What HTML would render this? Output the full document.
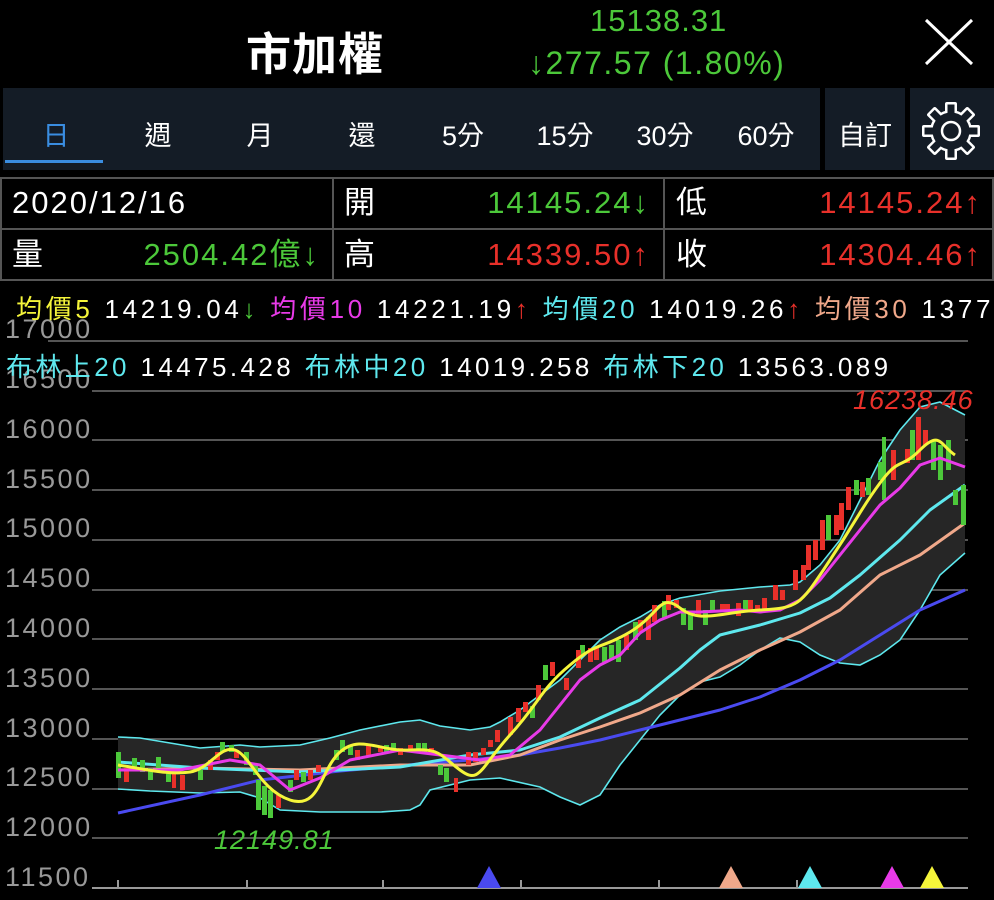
<!DOCTYPE html>
<html><head><meta charset="utf-8"><style>
*{margin:0;padding:0;box-sizing:border-box}
body{width:994px;height:900px;background:#000;overflow:hidden;position:relative;font-family:"Liberation Sans","Noto Sans CJK TC",sans-serif;color:#fff}
.a{position:absolute;white-space:nowrap}
.g{color:#4cc83a}.r{color:#e8302a}
.tab{position:absolute;top:88px;height:82px;background:#141c26}
.t{position:absolute;top:114px;font-size:27px;color:#fff;transform:translateX(-50%)}
.cell{position:absolute;border:2px solid #555;height:53px}
.ct{position:absolute;font-size:31px;letter-spacing:2px;line-height:51px;top:177px;white-space:nowrap}
.rv{text-align:right}
</style></head><body>
<div class="a" style="left:246px;top:18px;font-size:45px;font-weight:bold;letter-spacing:1px">市加權</div>
<div class="a g" style="left:590px;top:3px;font-size:31px;letter-spacing:1px">15138.31</div>
<div class="a g" style="left:528px;top:45px;font-size:32px;letter-spacing:1.5px">↓277.57 (1.80%)</div>
<svg class="a" style="left:922px;top:18px" width="54" height="48"><path d="M4 2L50 46M50 2L4 46" stroke="#fff" stroke-width="3"/></svg>
<div class="tab" style="left:3px;width:817px"></div>
<div class="tab" style="left:825px;width:80px"></div>
<div class="tab" style="left:910px;width:84px"></div>
<div class="a" style="left:5px;top:160px;width:98px;height:3px;background:#3a8de0"></div>
<div class="t" style="left:56px;color:#3a8de0">日</div>
<div class="t" style="left:158px">週</div>
<div class="t" style="left:260px">月</div>
<div class="t" style="left:362px">還</div>
<div class="t" style="left:463px">5分</div>
<div class="t" style="left:565px">15分</div>
<div class="t" style="left:665px">30分</div>
<div class="t" style="left:766px">60分</div>
<div class="t" style="left:865px">自訂</div>
<svg class="a" style="left:918px;top:98px" width="66" height="66" viewBox="-33 -33 66 66">
<g fill="#fff"><circle r="21"/><g id="th"><rect x="-6" y="-29" width="12" height="58" rx="2"/><rect x="-6" y="-29" width="12" height="58" rx="2" transform="rotate(90)"/></g><use href="#th" transform="rotate(45)"/></g>
<g fill="#141c26"><circle r="18.5"/><g id="th2"><rect x="-3.5" y="-26.5" width="7" height="53"/><rect x="-3.5" y="-26.5" width="7" height="53" transform="rotate(90)"/></g><use href="#th2" transform="rotate(45)"/></g>
<circle r="9" fill="none" stroke="#fff" stroke-width="2.5"/></svg>

<div class="cell" style="left:0;top:177px;width:334px"></div>
<div class="cell" style="left:332px;top:177px;width:333px"></div>
<div class="cell" style="left:663px;top:177px;width:331px"></div>
<div class="cell" style="left:0;top:228px;width:334px"></div>
<div class="cell" style="left:332px;top:228px;width:333px"></div>
<div class="cell" style="left:663px;top:228px;width:331px"></div>
<div class="ct" style="left:12px">2020/12/16</div>
<div class="ct" style="left:344px">開</div>
<div class="ct g rv" style="right:344px">14145.24↓</div>
<div class="ct" style="left:676px">低</div>
<div class="ct r rv" style="right:12px">14145.24↑</div>
<div class="ct" style="left:12px;top:229px">量</div>
<div class="ct g rv" style="right:674px;top:229px">2504.42億↓</div>
<div class="ct" style="left:344px;top:229px">高</div>
<div class="ct r rv" style="right:344px;top:229px">14339.50↑</div>
<div class="ct" style="left:676px;top:229px">收</div>
<div class="ct r rv" style="right:12px;top:229px">14304.46↑</div>

<svg class="a" style="left:0;top:0" width="994" height="900" font-family="Liberation Sans, sans-serif">
<g fill="#999" font-size="27" letter-spacing="2.5"><text x="5" y="338">17000</text><text x="5" y="388">16500</text><text x="5" y="438">16000</text><text x="5" y="488">15500</text><text x="5" y="537">15000</text><text x="5" y="587">14500</text><text x="5" y="637">14000</text><text x="5" y="687">13500</text><text x="5" y="737">13000</text><text x="5" y="786">12500</text><text x="5" y="836">12000</text><text x="5" y="886">11500</text></g>
<g stroke="#555" stroke-width="2"><path d="M48 341H968M92 391H968M92 440H968M92 490H968M92 540H968M92 590H968M92 639H968M92 689H968M92 739H968M92 789H968M92 838H968"/></g>
<path d="M92 888H968M118 888v-8M247 888v-8M383 888v-8M521 888v-8M659 888v-8M797 888v-8M935 888v-8" stroke="#999" stroke-width="2"/>
<path d="M118 737L140 738 200 748 240 745 260 747 300 745 330 738 360 730 400 722 420 720 440 726 470 730 490 727 500 722 520 710 560 680 580 660 600 640 620 627 640 617 660 605 680 598 720 591 760 587 790 585 800 582 820 565 840 540 860 500 880 460 900 430 920 407 940 402 965 415 965 553 940 575 920 610 900 640 880 655 860 665 840 663 820 655 800 642 780 638 760 650 740 665 720 677 700 682 680 695 660 715 640 740 620 765 600 795 580 805 560 797 540 787 500 778 470 780 430 790 420 805 410 810 380 812 320 812 280 810 260 798 240 792 200 793 150 791 118 789Z" fill="#262626"/>
<g fill="none" stroke="#5ee8ee" stroke-width="1.6"><path d="M118 737L140 738 200 748 240 745 260 747 300 745 330 738 360 730 400 722 420 720 440 726 470 730 490 727 500 722 520 710 560 680 580 660 600 640 620 627 640 617 660 605 680 598 720 591 760 587 790 585 800 582 820 565 840 540 860 500 880 460 900 430 920 407 940 402 965 415"/><path d="M118 789L150 791 200 793 240 792 260 798 280 810 320 812 380 812 410 810 420 805 430 790 470 780 500 778 540 787 560 797 580 805 600 795 620 765 640 740 660 715 680 695 700 682 720 677 740 665 760 650 780 638 800 642 820 655 840 663 860 665 880 655 900 640 920 610 940 575 965 553"/></g>
<g fill="none" stroke-width="3" stroke-linejoin="round">
<path stroke="#4a4af0" d="M118 813L200 795 260 780 340 771 430 763 470 760 520 755 560 748 600 740 640 730 680 720 720 710 760 697 800 680 840 660 880 635 920 610 965 590"/>
<path stroke="#f0a88a" d="M118 770L200 768 300 770 400 765 470 765 520 755 560 740 600 727 640 713 680 695 720 670 760 650 800 632 840 610 880 575 920 555 965 523"/>
<path stroke="#5ee8ee" d="M118 762L200 768 300 772 400 767 470 755 520 750 560 737 600 718 640 700 680 668 700 650 720 635 760 625 800 613 830 598 860 575 900 540 930 510 965 485"/>
</g>
<g fill="#4cc83a"><rect x="116" y="752" width="5" height="26"/><rect x="132" y="758" width="5" height="12"/><rect x="140" y="760" width="5" height="12"/><rect x="148" y="768" width="5" height="12"/><rect x="156" y="757" width="5" height="11"/><rect x="166" y="770" width="5" height="12"/><rect x="198" y="770" width="5" height="10"/><rect x="220" y="742" width="5" height="10"/><rect x="229" y="745" width="5" height="7"/><rect x="244" y="752" width="5" height="13"/><rect x="253" y="765" width="5" height="10"/><rect x="256" y="780" width="5" height="30"/><rect x="262" y="786" width="5" height="29"/><rect x="268" y="790" width="5" height="28"/><rect x="288" y="780" width="5" height="12"/><rect x="301" y="772" width="5" height="10"/><rect x="334" y="750" width="5" height="10"/><rect x="340" y="740" width="5" height="12"/><rect x="348" y="745" width="5" height="10"/><rect x="384" y="745" width="5" height="7"/><rect x="391" y="743" width="5" height="9"/><rect x="416" y="743" width="5" height="9"/><rect x="422" y="743" width="5" height="9"/><rect x="438" y="765" width="5" height="10"/><rect x="444" y="768" width="5" height="14"/><rect x="530" y="706" width="5" height="12"/><rect x="543" y="665" width="5" height="15"/><rect x="580" y="645" width="5" height="10"/><rect x="602" y="647" width="5" height="15"/><rect x="609" y="645" width="5" height="15"/><rect x="616" y="640" width="5" height="22"/><rect x="633" y="622" width="5" height="18"/><rect x="662" y="601" width="5" height="17"/><rect x="681" y="608" width="5" height="17"/><rect x="688" y="611" width="5" height="19"/><rect x="703" y="610" width="5" height="15"/><rect x="710" y="600" width="5" height="12"/><rect x="743" y="600" width="5" height="12"/><rect x="826" y="515" width="5" height="25"/><rect x="854" y="480" width="5" height="15"/><rect x="866" y="478" width="5" height="17"/><rect x="878" y="462" width="5" height="18"/><rect x="882" y="437" width="4" height="63"/><rect x="910" y="430" width="5" height="30"/><rect x="931" y="440" width="5" height="30"/><rect x="938" y="445" width="5" height="35"/><rect x="946" y="440" width="5" height="30"/><rect x="953" y="490" width="5" height="15"/><rect x="961" y="485" width="5" height="40"/></g>
<g fill="#e8302a"><rect x="124" y="768" width="5" height="14"/><rect x="172" y="770" width="4" height="18"/><rect x="180" y="775" width="5" height="15"/><rect x="208" y="760" width="5" height="10"/><rect x="215" y="752" width="5" height="8"/><rect x="234" y="750" width="5" height="8"/><rect x="276" y="795" width="5" height="13"/><rect x="294" y="770" width="5" height="10"/><rect x="308" y="770" width="5" height="10"/><rect x="316" y="765" width="5" height="7"/><rect x="355" y="750" width="5" height="10"/><rect x="366" y="745" width="5" height="12"/><rect x="378" y="747" width="5" height="5"/><rect x="398" y="748" width="5" height="7"/><rect x="408" y="745" width="5" height="7"/><rect x="429" y="748" width="5" height="7"/><rect x="454" y="778" width="4" height="14"/><rect x="466" y="752" width="5" height="13"/><rect x="473" y="752" width="5" height="10"/><rect x="481" y="748" width="5" height="7"/><rect x="488" y="740" width="5" height="7"/><rect x="495" y="730" width="5" height="12"/><rect x="508" y="717" width="5" height="18"/><rect x="516" y="708" width="5" height="14"/><rect x="523" y="702" width="5" height="10"/><rect x="536" y="685" width="5" height="15"/><rect x="550" y="662" width="5" height="14"/><rect x="564" y="678" width="5" height="12"/><rect x="576" y="650" width="5" height="18"/><rect x="588" y="648" width="5" height="14"/><rect x="594" y="648" width="5" height="12"/><rect x="624" y="635" width="5" height="15"/><rect x="638" y="620" width="5" height="12"/><rect x="646" y="617" width="5" height="23"/><rect x="652" y="605" width="5" height="17"/><rect x="666" y="595" width="5" height="15"/><rect x="674" y="600" width="5" height="8"/><rect x="696" y="600" width="5" height="15"/><rect x="720" y="604" width="5" height="8"/><rect x="725" y="604" width="5" height="8"/><rect x="736" y="603" width="5" height="13"/><rect x="748" y="600" width="5" height="10"/><rect x="755" y="605" width="5" height="7"/><rect x="762" y="598" width="5" height="12"/><rect x="773" y="585" width="5" height="15"/><rect x="780" y="590" width="5" height="10"/><rect x="793" y="570" width="5" height="20"/><rect x="801" y="565" width="5" height="15"/><rect x="806" y="545" width="5" height="25"/><rect x="813" y="540" width="5" height="20"/><rect x="820" y="520" width="5" height="30"/><rect x="834" y="515" width="5" height="20"/><rect x="839" y="503" width="5" height="27"/><rect x="846" y="487" width="5" height="23"/><rect x="860" y="482" width="5" height="15"/><rect x="891" y="450" width="5" height="30"/><rect x="905" y="449" width="5" height="14"/><rect x="916" y="417" width="5" height="43"/><rect x="923" y="430" width="5" height="15"/></g>
<g fill="none" stroke-width="3" stroke-linejoin="round">
<path stroke="#e83ae8" d="M118 770L180 770 230 760 260 765 290 790 320 778 350 760 400 750 440 755 480 760 510 755 540 730 560 705 580 680 600 665 620 655 640 633 660 620 680 612 700 612 740 610 760 612 780 610 800 600 820 580 840 555 860 530 880 505 900 488 920 465 940 458 965 467"/>
<path stroke="#f5f53a" d="M118 765C150 770 170 775 190 772S220 745 235 750 260 790 290 800 320 770 340 752 380 752 410 750 440 755 460 770 480 768 510 735 540 690 570 665 600 650 630 632 660 592 680 608 720 612 760 610 800 605 830 560 860 510 880 483 900 470 920 450 940 445 955 455 965 480"/>
</g>
<text x="853" y="409" fill="#e8302a" font-size="27" font-style="italic" letter-spacing="1">16238.46</text>
<text x="214" y="849" fill="#4cc83a" font-size="27" font-style="italic" letter-spacing="1">12149.81</text>
<path d="M489 866L477 888H501Z" fill="#4a4af0"/><path d="M731 866L719 888H743Z" fill="#f0a88a"/><path d="M810 866L798 888H822Z" fill="#5ee8ee"/><path d="M892 866L880 888H904Z" fill="#e83ae8"/><path d="M932 866L920 888H944Z" fill="#f5f53a"/>
</svg>
<div class="a" style="left:16px;top:289px;font-size:26px;letter-spacing:3.7px"><span style="color:#f5f53a">均價5</span> 14219.04<span class="g">↓</span> <span style="color:#e83ae8">均價10</span> 14221.19<span class="r">↑</span> <span style="color:#5ee8ee">均價20</span> 14019.26<span class="r">↑</span> <span style="color:#f0a88a">均價30</span> 1377</div>
<div class="a" style="left:6px;top:347px;font-size:26px;letter-spacing:3.4px"><span style="color:#5ee8ee">布林上20</span> 14475.428 <span style="color:#5ee8ee">布林中20</span> 14019.258 <span style="color:#5ee8ee">布林下20</span> 13563.089</div>
</body></html>
